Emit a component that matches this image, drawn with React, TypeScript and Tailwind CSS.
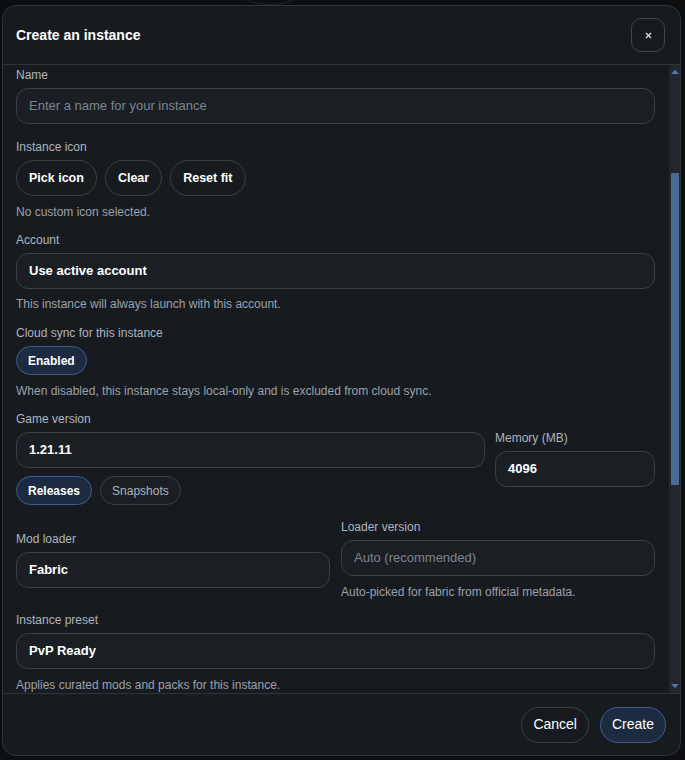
import { X } from 'lucide-react';

const label = 'block text-[12px] leading-[14px] text-[#aeb4bd]';
const field =
  'w-full h-[36px] rounded-[12px] border border-[#3a4048] bg-[#1b1f24] px-[12px] flex items-center text-[13px]';
const helper = 'text-[12px] leading-[14px] text-[#9aa1aa]';

function Pill({ children, active }: { children: React.ReactNode; active?: boolean }) {
  return (
    <button
      className={
        active
          ? 'h-[29px] px-[11px] rounded-full border border-[#3c5f8f] bg-[#1d2b40] text-[12px] font-semibold text-white'
          : 'h-[29px] px-[11px] rounded-full border border-[#3a4048] bg-[#1b1f24] text-[12px] text-[#aeb4bd]'
      }
    >
      {children}
    </button>
  );
}

function Button({ children }: { children: React.ReactNode }) {
  return (
    <button className="h-[36px] px-[12px] rounded-full border border-[#3a4048] bg-[#171b20] text-[12.5px] font-bold text-white">
      {children}
    </button>
  );
}

export default function App() {
  return (
    <div
      className="w-[685px] h-[760px] bg-[#0d0e10] relative overflow-hidden"
      style={{ fontFamily: '"Liberation Sans", Arial, sans-serif' }}
    >
      <div className="absolute left-[215px] top-[-100px] w-[110px] h-[105px] rounded-full border border-[#22262c]" />
      <div className="absolute left-[2px] top-[5px] w-[679px] h-[751px] rounded-[14px] border border-[#2e343c] bg-[#171b20] flex flex-col overflow-hidden">
        {/* header */}
        <div className="h-[59px] shrink-0 flex items-center justify-between pl-[13px] pr-[15px] border-b border-[#2e343c]">
          <h2 className="text-[14px] font-bold text-white">Create an instance</h2>
          <button className="w-[34px] h-[34px] rounded-[10px] border border-[#3f454d] flex items-center justify-center text-[#e6e8eb]">
            <X className="w-[9px] h-[9px]" strokeWidth={3} />
          </button>
        </div>

        {/* body */}
        <div className="flex-1 min-h-0 flex">
          <div className="flex-1 min-w-0 overflow-hidden pl-[13px] pr-[14px] pt-[3px]">
            <div className="flex flex-col">
              <label className={label}>Name</label>
              <div className="mt-[6px]">
                <div className={field + ' text-[#7d848d]'}>Enter a name for your instance</div>
              </div>

              <label className={label + ' mt-[16px]'}>Instance icon</label>
              <div className="mt-[6px] flex gap-[8px]">
                <Button>Pick icon</Button>
                <Button>Clear</Button>
                <Button>Reset fit</Button>
              </div>
              <div className={helper + ' mt-[9px]'}>No custom icon selected.</div>

              <label className={label + ' mt-[14px]'}>Account</label>
              <div className="mt-[6px]">
                <div className={field + ' font-bold text-white'}>Use active account</div>
              </div>
              <div className={helper + ' mt-[8px]'}>This instance will always launch with this account.</div>

              <label className={label + ' mt-[15px]'}>Cloud sync for this instance</label>
              <div className="mt-[6px] flex">
                <Pill active>Enabled</Pill>
              </div>
              <div className={helper + ' mt-[9px]'}>
                When disabled, this instance stays local-only and is excluded from cloud sync.
              </div>

              <div className="mt-[14px] flex items-center gap-[10px]">
                <div className="flex-1 min-w-0">
                  <label className={label}>Game version</label>
                  <div className="mt-[6px]">
                    <div className={field + ' font-bold text-white'}>1.21.11</div>
                  </div>
                  <div className="mt-[8px] flex gap-[8px]">
                    <Pill active>Releases</Pill>
                    <Pill>Snapshots</Pill>
                  </div>
                </div>
                <div className="w-[160px] shrink-0">
                  <label className={label}>Memory (MB)</label>
                  <div className="mt-[6px]">
                    <div className={field + ' font-bold text-white'}>4096</div>
                  </div>
                </div>
              </div>

              <div className="mt-[15px] grid grid-cols-2 gap-[11px] items-center">
                <div>
                  <label className={label}>Mod loader</label>
                  <div className="mt-[6px]">
                    <div className={field + ' font-bold text-white'}>Fabric</div>
                  </div>
                </div>
                <div>
                  <label className={label}>Loader version</label>
                  <div className="mt-[6px]">
                    <div className={field + ' text-[#7d848d]'}>Auto (recommended)</div>
                  </div>
                  <div className={helper + ' mt-[9px]'}>Auto-picked for fabric from official metadata.</div>
                </div>
              </div>

              <label className={label + ' mt-[14px]'}>Instance preset</label>
              <div className="mt-[6px]">
                <div className={field + ' font-bold text-white'}>PvP Ready</div>
              </div>
              <div className={helper + ' mt-[9px]'}>Applies curated mods and packs for this instance.</div>
            </div>
          </div>

          {/* scrollbar */}
          <div className="w-[11px] shrink-0 bg-[#23272d] flex flex-col items-center">
            <div className="h-[14px] flex items-center justify-center">
              <div className="w-0 h-0 border-l-[4px] border-r-[4px] border-b-[4px] border-l-transparent border-r-transparent border-b-[#4d78b3]" />
            </div>
            <div className="mt-[94px] w-[8px] h-[312px] bg-[#4a6a96]" />
            <div className="flex-1" />
            <div className="h-[14px] flex items-center justify-center">
              <div className="w-0 h-0 border-l-[4px] border-r-[4px] border-t-[4px] border-l-transparent border-r-transparent border-t-[#4d78b3]" />
            </div>
          </div>
        </div>

        {/* footer */}
        <div className="h-[62px] shrink-0 border-t border-[#2e343c] flex items-center justify-end gap-[11px] pr-[14px]">
          <button className="h-[36px] px-[11px] rounded-full border border-[#3a4048] bg-[#171b20] text-[14px] text-white">
            Cancel
          </button>
          <button className="h-[36px] px-[11px] rounded-full border border-[#3c5f8f] bg-[#1d2b40] text-[14px] text-white">
            Create
          </button>
        </div>
      </div>
    </div>
  );
}
